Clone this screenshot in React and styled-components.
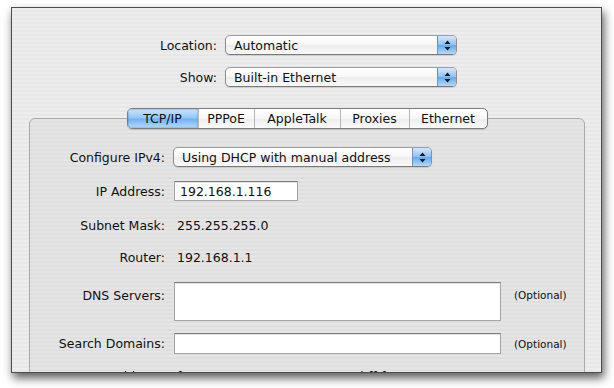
import React from "react";
import styled, { createGlobalStyle } from "styled-components";

const GlobalStyle = createGlobalStyle`
  html, body {
    margin: 0;
    padding: 0;
    background: #ffffff;
  }
  body {
    font-family: "DejaVu Sans", "Liberation Sans", sans-serif;
    font-size: 12.5px;
    color: #111;
  }
`;

const Arrows = () => (
  <svg width="7" height="11" viewBox="0 0 7 11">
    <path d="M3.5 0.5 L6.5 4 L0.5 4 Z" fill="#111" />
    <path d="M0.5 7 L6.5 7 L3.5 10.5 Z" fill="#111" />
  </svg>
);

const Popup = ({ value, width }) => (
  <PopupBox $width={width}>
    <PopupText>{value}</PopupText>
    <PopupArrows>
      <Arrows />
    </PopupArrows>
  </PopupBox>
);

const TABS = ["TCP/IP", "PPPoE", "AppleTalk", "Proxies", "Ethernet"];
const TAB_WIDTHS = [70, 56, 86, 69, 78];

const App = () => {
  return (
    <>
      <GlobalStyle />
      <Page>
        <Window>
          <Header>
            <TopRow>
              <TopLabel>Location:</TopLabel>
              <Popup value="Automatic" width={232} />
            </TopRow>
            <TopRow>
              <TopLabel>Show:</TopLabel>
              <Popup value="Built-in Ethernet" width={232} />
            </TopRow>
          </Header>

          <TabArea>
            <TabBar>
              {TABS.map((t, i) => (
                <Tab key={t} $width={TAB_WIDTHS[i]} $active={i === 0}>
                  {t}
                </Tab>
              ))}
            </TabBar>
            <Panel>
              <Row $top={0}>
                <Label>Configure IPv4:</Label>
                <Popup value="Using DHCP with manual address" width={259} />
              </Row>
              <Row $top={14}>
                <Label>IP Address:</Label>
                <Field $width={124} $height={20}>192.168.1.116</Field>
              </Row>
              <Row $top={14}>
                <Label>Subnet Mask:</Label>
                <Value>255.255.255.0</Value>
              </Row>
              <Row $top={12}>
                <Label>Router:</Label>
                <Value>192.168.1.1</Value>
              </Row>
              <Row $top={15} $alignTop>
                <Label $pad={6}>DNS Servers:</Label>
                <Field $width={327} $height={39} />
                <Optional $pad={7}>(Optional)</Optional>
              </Row>
              <Row $top={12}>
                <Label>Search Domains:</Label>
                <Field $width={327} $height={21} />
                <Optional>(Optional)</Optional>
              </Row>
              <Row $top={12}>
                <Label>IPv6 Address:</Label>
                <Value>fe80:0000:0000:0000:0216:cbff:fea3:0979</Value>
              </Row>
            </Panel>
          </TabArea>
        </Window>
      </Page>
    </>
  );
};

const Page = styled.div`
  width: 614px;
  height: 388px;
  padding: 7px 0 0 11px;
  box-sizing: border-box;
  overflow: hidden;
`;

const Window = styled.div`
  width: 591px;
  height: 366px;
  box-sizing: border-box;
  border: 1px solid #4d4d4d;
  overflow: hidden;
  background: repeating-linear-gradient(
    to bottom,
    #ededed 0px,
    #ededed 2px,
    #e7e7e7 2px,
    #e7e7e7 4px
  );
  box-shadow: 2px 5px 9px rgba(0, 0, 0, 0.65);
`;

const Header = styled.div`
  display: flex;
  flex-direction: column;
  gap: 12px;
  padding-top: 27px;
`;

const TopRow = styled.div`
  display: flex;
  align-items: center;
  height: 20px;
`;

const TopLabel = styled.div`
  width: 205px;
  text-align: right;
  margin-right: 8px;
`;

const PopupBox = styled.div`
  display: flex;
  align-items: stretch;
  width: ${(p) => p.$width}px;
  height: 20px;
  box-sizing: border-box;
  border: 1px solid #8f8f8f;
  border-top-color: #9c9c9c;
  border-bottom-color: #7a7a7a;
  border-radius: 5px;
  overflow: hidden;
  background: linear-gradient(
    to bottom,
    #ffffff 0%,
    #f7f7f7 50%,
    #ececec 51%,
    #fafafa 100%
  );
  box-shadow: 0 1px 1px rgba(0, 0, 0, 0.12);
`;

const PopupText = styled.div`
  flex: 1;
  display: flex;
  align-items: center;
  padding-left: 8px;
  white-space: nowrap;
`;

const PopupArrows = styled.div`
  width: 18px;
  display: flex;
  align-items: center;
  justify-content: center;
  border-left: 1px solid #6b94c2;
  background: linear-gradient(
    to bottom,
    #d3e8fd 0%,
    #8ec3f6 48%,
    #64a9f0 52%,
    #b2dafd 100%
  );
`;

const TabArea = styled.div`
  margin-top: 21px;
  margin-left: 17px;
  width: 556px;
  display: flex;
  flex-direction: column;
  align-items: center;
`;

const TabBar = styled.div`
  position: relative;
  z-index: 1;
  display: flex;
  height: 21px;
  margin-bottom: -11px;
  box-sizing: border-box;
  border: 1px solid #7d7d7d;
  border-radius: 5px;
  overflow: hidden;
  background: linear-gradient(
    to bottom,
    #ffffff 0%,
    #f8f8f8 50%,
    #ededed 51%,
    #fbfbfb 100%
  );
  box-shadow: 0 1px 1px rgba(0, 0, 0, 0.15);
`;

const Tab = styled.div`
  width: ${(p) => p.$width}px;
  box-sizing: border-box;
  display: flex;
  align-items: center;
  justify-content: center;
  ${(p) =>
    p.$active &&
    `
    background: linear-gradient(
      to bottom,
      #cde5fd 0%,
      #93c6f6 48%,
      #6eb0f2 52%,
      #b7dcfc 100%
    );
    box-shadow: inset 0 0 2px rgba(40, 90, 160, 0.7);
  `}
  & + & {
    border-left: 1px solid #b8b8b8;
  }
`;

const Panel = styled.div`
  width: 100%;
  height: 300px;
  box-sizing: border-box;
  border: 1px solid #a9a9a9;
  border-radius: 6px;
  padding-top: 28px;
  background: repeating-linear-gradient(
    to bottom,
    #e5e5e5 0px,
    #e5e5e5 2px,
    #dfdfdf 2px,
    #dfdfdf 4px
  );
`;

const Row = styled.div`
  display: flex;
  align-items: ${(p) => (p.$alignTop ? "flex-start" : "center")};
  min-height: 20px;
  margin-top: ${(p) => p.$top}px;
  white-space: nowrap;
`;

const Label = styled.div`
  width: 135px;
  flex: none;
  text-align: right;
  margin-right: 8px;
  padding-top: ${(p) => p.$pad || 0}px;
`;

const Value = styled.div`
  padding-left: 4px;
`;

const Field = styled.div`
  width: ${(p) => p.$width}px;
  height: ${(p) => p.$height}px;
  box-sizing: border-box;
  margin-left: 1px;
  padding-left: 5px;
  display: flex;
  align-items: center;
  background: #ffffff;
  border: 1px solid #a5a5a5;
  border-top-color: #7c7c7c;
  box-shadow: inset 0 1px 1px rgba(0, 0, 0, 0.12);
`;

const Optional = styled.div`
  font-size: 10.5px;
  margin-left: 13px;
  padding-top: ${(p) => p.$pad || 0}px;
`;

export default App;
